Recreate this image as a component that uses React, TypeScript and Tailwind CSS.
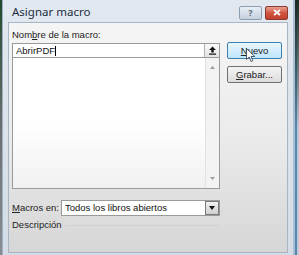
import React from "react";

export default function App() {
  const font = { fontFamily: '"Noto Sans", "Open Sans", sans-serif' };
  const small = { fontFamily: '"Liberation Sans", Arial, sans-serif' };
  return (
    <div className="w-[299px] h-[255px] overflow-hidden flex bg-[#2a3a33]" style={font}>
      {/* left outer strip */}
      <div className="w-[2px] h-full bg-gradient-to-b from-[#1f4a2e] via-[#6b6f72] to-[#8a8e92]" />
      {/* window */}
      <div className="w-[291px] h-[262px] flex flex-col bg-gradient-to-b from-[#e2e8ef] to-[#d3dce6] border-l border-[#9fb0c2]">
        {/* title bar */}
        <div className="h-[22px] shrink-0 flex items-center pl-[9px] pr-[5px]">
          <span className="text-[11.5px] text-[#1c2e44] leading-none mt-[2px]">Asignar macro</span>
          <div className="ml-auto flex gap-[3px] mt-[3px]">
            <div className="w-[23px] h-[14px] rounded-[2px] border border-[#8e9eb2] bg-gradient-to-b from-[#e8eef5] to-[#c4d0de] flex items-center justify-center">
              <span className="text-[9px] leading-none text-[#5a6a7e] font-bold">?</span>
            </div>
            <div className="w-[23px] h-[14px] rounded-[2px] border border-[#8a3a30] bg-gradient-to-b from-[#e8a090] via-[#d0543f] to-[#c0402c] flex items-center justify-center">
              <svg width="8" height="7" viewBox="0 0 8 7">
                <path d="M1 1 L7 6 M7 1 L1 6" stroke="#ffffff" strokeWidth="1.8" />
              </svg>
            </div>
          </div>
        </div>
        {/* content */}
        <div className="mx-[5px] h-[231px] shrink-0 border border-[#a9b5c2] bg-gradient-to-b from-[#f5f5f5] via-[#ebebeb] to-[#d6d6d6] flex" style={small}>
          <div className="ml-[3px] w-[208px] flex flex-col">
            <div className="h-[20px] pt-[6px] text-[9.5px] leading-[11px] text-[#222] whitespace-nowrap">
              Nom<span className="underline">b</span>re de la macro:
            </div>
            <div className="h-[15px] border border-[#9a9a9a] bg-white flex items-center">
              <span className="ml-[3px] text-[9.5px] leading-none text-[#111]">AbrirPDF</span>
              <span className="w-[1px] h-[10px] bg-black" />
              <div className="ml-auto w-[15px] h-[13px] border-l border-[#b0b0b0] bg-gradient-to-b from-[#fafafa] to-[#e4e4e4] flex items-center justify-center">
                <svg width="9" height="9" viewBox="0 0 9 9">
                  <path d="M4.5 0.5 L8 4 L5.7 4 L5.7 6.5 L3.3 6.5 L3.3 4 L1 4 Z" fill="#111" />
                  <rect x="1" y="7.5" width="7" height="1.2" fill="#111" />
                </svg>
              </div>
            </div>
            <div className="h-[131px] border border-t-0 border-[#9a9a9a] bg-gradient-to-b from-white via-white to-[#f1f1f1] flex">
              <div className="ml-auto w-[14px] h-full border-l border-[#e2e2e2] bg-[#f3f3f3] flex flex-col items-center justify-between py-[8px]">
                <svg width="5" height="3" viewBox="0 0 5 3"><path d="M0 3 L2.5 0 L5 3 Z" fill="#9a9a9a" /></svg>
                <svg width="5" height="3" viewBox="0 0 5 3"><path d="M0 0 L2.5 3 L5 0 Z" fill="#9a9a9a" /></svg>
              </div>
            </div>
            <div className="mt-[11px] h-[16px] flex items-center">
              <span className="w-[49px] shrink-0 text-[9.5px] leading-none text-[#222] whitespace-nowrap">
                <span className="underline">M</span>acros en:
              </span>
              <div className="w-[159px] h-[16px] border border-[#9a9a9a] bg-white flex items-center">
                <span className="ml-[3px] text-[9.5px] leading-none text-[#111] whitespace-nowrap">Todos los libros abiertos</span>
                <div className="ml-auto w-[14px] h-[14px] border border-[#7a7a7a] bg-gradient-to-b from-[#f2f2f2] to-[#d0d0d0] flex items-center justify-center">
                  <svg width="6" height="4" viewBox="0 0 6 4"><path d="M0 0 L3 4 L6 0 Z" fill="#111" /></svg>
                </div>
              </div>
            </div>
            <div className="mt-[3px] h-[12px] flex items-center">
              <span className="text-[9.5px] leading-none text-[#222] whitespace-nowrap">Descripción</span>
              <div className="ml-[4px] flex-1 h-[1px] bg-[#d2d2d2]" />
            </div>
          </div>
          <div className="ml-[7px] pt-[19px] flex flex-col gap-[7px] relative">
            <div className="w-[55px] h-[17px] rounded-[2px] border border-[#3c7fb1] bg-gradient-to-b from-[#eaf6fd] to-[#bee6fd] flex items-center justify-center">
              <span className="text-[9.5px] leading-none text-[#222]"><span className="underline">N</span>uevo</span>
            </div>
            <div className="w-[55px] h-[17px] rounded-[2px] border border-[#707070] bg-gradient-to-b from-[#f4f4f4] to-[#dcdcdc] flex items-center justify-center">
              <span className="text-[9.5px] leading-none text-[#222]"><span className="underline">G</span>rabar...</span>
            </div>
            <svg className="absolute left-[19px] top-[25px]" width="11" height="15" viewBox="0 0 11 15">
              <path d="M0.5 0.5 L0.5 11.5 L3.2 9 L5 13.5 L6.8 12.7 L5 8.5 L8.8 8.5 Z" fill="#ffffff" stroke="#3a4a5a" strokeWidth="0.9" strokeLinejoin="round" />
            </svg>
          </div>
        </div>
      </div>
      {/* right outer strip */}
      <div className="w-[6px] h-full flex">
        <div className="w-[2px] h-full bg-[#a9bfd4]" />
        <div className="w-[2px] h-full bg-gradient-to-b from-[#1b2a22] via-[#5d86ab] to-[#5a86ad]" />
        <div className="w-[2px] h-full bg-gradient-to-b from-[#1b2a22] via-[#b8c6d4] to-[#c0ccd8]" />
      </div>
    </div>
  );
}
